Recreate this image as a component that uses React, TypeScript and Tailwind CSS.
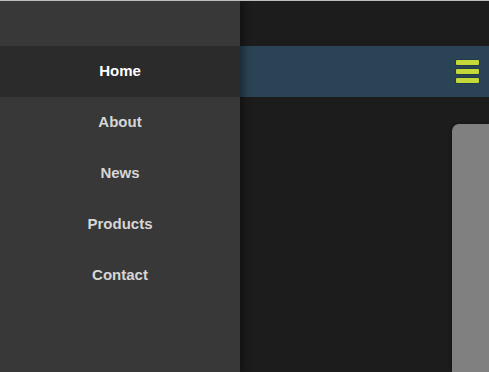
import React from "react";

const items = ["Home", "About", "News", "Products", "Contact"];

export default function App() {
  return (
    <div
      className="flex h-[372px] w-full overflow-hidden border-t border-[#bdbdbd] bg-[#1b1c1b]"
      style={{ fontFamily: '"Liberation Sans", Arial, sans-serif' }}
    >
      <nav className="relative z-10 flex w-[240px] shrink-0 flex-col bg-[#383838] pt-[45px] shadow-[3px_0_8px_rgba(0,0,0,0.45)]">
        {items.map((it, i) => (
          <a
            key={it}
            className={
              i === 0
                ? "flex h-[51px] items-center justify-center bg-[#2b2b2b] text-[15px] font-bold text-white"
                : "flex h-[51px] items-center justify-center text-[15px] font-bold text-[#d6d6d6]"
            }
          >
            {it}
          </a>
        ))}
      </nav>
      <main className="flex min-w-0 flex-1 flex-col pt-[45px]">
        <header className="flex h-[51px] items-center justify-end bg-[#2a4456] pr-[10px]">
          <div className="flex w-[23px] flex-col gap-[4px]">
            <span className="block h-[5px] rounded-[1px] bg-[#c5d83a] shadow-[0_0_0_0.5px_rgba(0,0,0,0.3)]" />
            <span className="block h-[5px] rounded-[1px] bg-[#c5d83a] shadow-[0_0_0_0.5px_rgba(0,0,0,0.3)]" />
            <span className="block h-[5px] rounded-[1px] bg-[#c5d83a] shadow-[0_0_0_0.5px_rgba(0,0,0,0.3)]" />
          </div>
        </header>
        <div className="flex flex-1 pl-[212px] pt-[27px]">
          <div className="flex-1 rounded-tl-[7px] bg-[#808080] shadow-[-1px_0_3px_rgba(0,0,0,0.3)]" />
        </div>
      </main>
    </div>
  );
}
